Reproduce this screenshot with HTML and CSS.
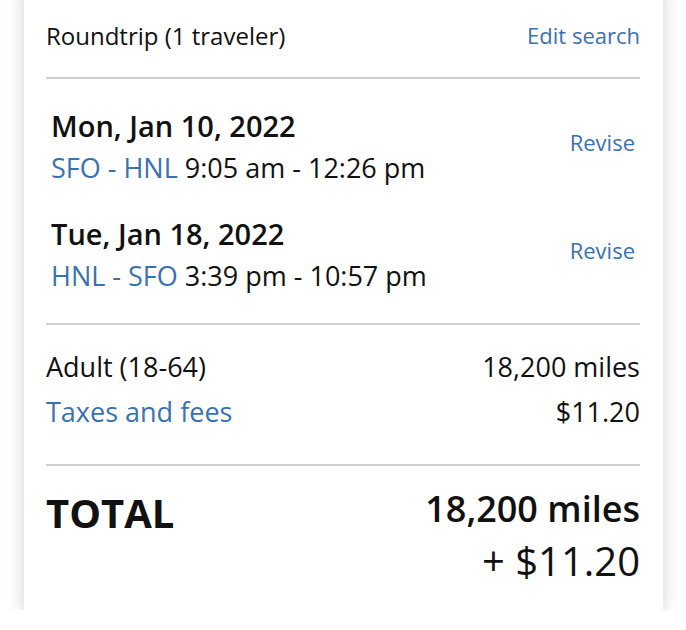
FILE: index.html
```html
<!DOCTYPE html>
<html lang="en">
<head>
<meta charset="utf-8">
<title>Trip summary</title>
<link rel="stylesheet" href="styles.css">
</head>
<body>
<div class="page">
  <section class="card">
    <header class="summary-head">
      <span class="trip-type">Roundtrip (1 traveler)</span>
      <a class="link edit" href="#">Edit search</a>
    </header>
    <hr class="divider">
    <div class="flights">
      <div class="flight">
        <div class="flight-info">
          <div class="flight-date">Mon, Jan 10, 2022</div>
          <div class="flight-route"><span class="route">SFO - HNL</span> 9:05 am - 12:26 pm</div>
        </div>
        <a class="link revise" href="#">Revise</a>
      </div>
      <div class="flight">
        <div class="flight-info">
          <div class="flight-date">Tue, Jan 18, 2022</div>
          <div class="flight-route"><span class="route">HNL - SFO</span> 3:39 pm - 10:57 pm</div>
        </div>
        <a class="link revise" href="#">Revise</a>
      </div>
    </div>
    <hr class="divider">
    <div class="prices">
      <div class="price-row">
        <span>Adult (18-64)</span>
        <span>18,200 miles</span>
      </div>
      <div class="price-row">
        <a class="link" href="#">Taxes and fees</a>
        <span>$11.20</span>
      </div>
    </div>
    <hr class="divider">
    <div class="total">
      <div class="total-label">TOTAL</div>
      <div class="total-amount">
        <div class="total-miles">18,200 miles</div>
        <div class="total-cash">+ $11.20</div>
      </div>
    </div>
  </section>
</div>
</body>
</html>
```

FILE: styles.css
```css
* { box-sizing: border-box; }

html, body {
  margin: 0;
  padding: 0;
  background: #ffffff;
}

body {
  font-family: "Open Sans", "Liberation Sans", sans-serif;
  color: #111111;
  overflow: hidden;
}

.page {
  padding: 0 23px 0 24px;
}

.card {
  margin-top: -20px;
  background: #ffffff;
  box-shadow: 0 4px 16px rgba(0, 0, 0, 0.18);
  padding: 38px 23px 23px 22px;
  width: 639px;
}

.link {
  color: #3a71b2;
  text-decoration: none;
}

.summary-head {
  display: flex;
  justify-content: space-between;
  align-items: flex-start;
  padding-bottom: 23px;
}

.trip-type {
  font-size: 24px;
  line-height: 36px;
}

.edit {
  font-size: 22px;
  line-height: 36px;
  margin-top: -1px;
}

.divider {
  margin: 0;
  border: 0;
  height: 2px;
  background: #cfcfcf;
}

.flights {
  display: flex;
  flex-direction: column;
  gap: 24px;
  padding: 26px 5px 26px 5px;
}

.flight {
  display: flex;
  justify-content: space-between;
  align-items: flex-start;
}

.flight-date {
  font-size: 29px;
  font-weight: 600;
  line-height: 42px;
}

.flight-route {
  font-size: 27px;
  line-height: 42px;
}

.route { color: #3a71b2; }

.revise {
  font-size: 22px;
  line-height: 30px;
  margin-top: 22px;
}

.prices {
  padding: 19px 0 30px;
}

.price-row {
  display: flex;
  justify-content: space-between;
  font-size: 27px;
  line-height: 45px;
}

.total {
  display: flex;
  justify-content: space-between;
  align-items: flex-start;
  padding-top: 17px;
}

.total-label {
  font-size: 40px;
  font-weight: 700;
  line-height: 52px;
  margin-top: 4px;
}

.total-amount {
  text-align: right;
}

.total-miles {
  font-size: 36px;
  font-weight: 600;
  line-height: 52px;
}

.total-cash {
  font-size: 40px;
  line-height: 52px;
}
```
